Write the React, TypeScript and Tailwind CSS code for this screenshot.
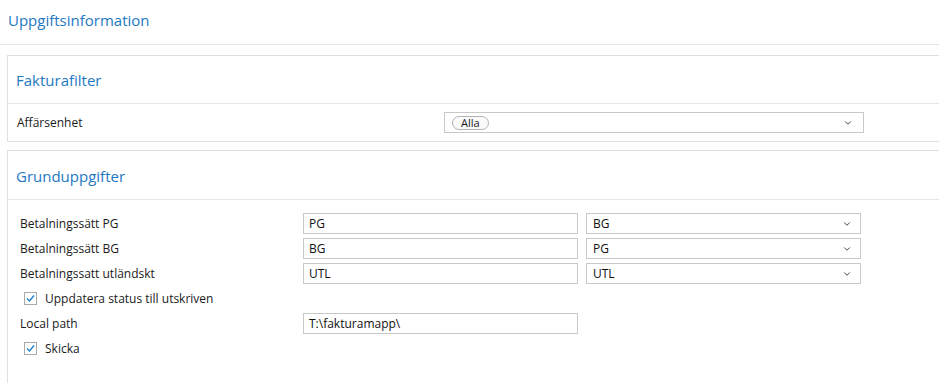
import { ChevronDown } from "lucide-react";

const font = { fontFamily: '"Segoe UI", "Open Sans", "Noto Sans", sans-serif' };

const Check = () => (
  <span className="flex h-[13px] w-[13px] items-center justify-center border border-[#a9a9a9] bg-white">
    <svg width="11" height="11" viewBox="0 0 11 11">
      <path d="M2 5.5 L4.5 8 L9 2.5" fill="none" stroke="#1f7fd0" strokeWidth="1.4" />
    </svg>
  </span>
);

const Select = ({ children, w }: { children: React.ReactNode; w: string }) => (
  <div className={`flex h-[21px] items-center justify-between border border-[#c8c8c8] bg-white pl-[6px] pr-[8px] ${w}`}>
    <span className="text-[12px] leading-none text-[#111]">{children}</span>
    <ChevronDown className="h-[10px] w-[10px] text-[#333]" strokeWidth={2.2} />
  </div>
);

const Input = ({ value }: { value: string }) => (
  <div className="flex h-[21px] w-[275px] items-center border border-[#c8c8c8] bg-white px-[5px] text-[12px] text-[#111]">
    {value}
  </div>
);

const rows = [
  { label: "Betalningssätt PG", value: "PG", sel: "BG" },
  { label: "Betalningssätt BG", value: "BG", sel: "PG" },
  { label: "Betalningssatt utländskt", value: "UTL", sel: "UTL" },
];

export default function App() {
  return (
    <div className="h-[383px] w-[939px] overflow-hidden bg-white text-[#1a1a1a]" style={font}>
      <div className="h-[45px] border-b border-[#e4e6e8] pl-[8px] pt-[9px] text-[15px] text-[#1e78c2]">
        Uppgiftsinformation
      </div>

      <div className="ml-[7px] mr-[-4px] mt-[10px] border border-[#dde1e6]">
        <div className="flex h-[48px] items-center border-b border-[#e4e7ea] pl-[8px] pt-[2px] text-[15px] text-[#1e78c2]">
          Fakturafilter
        </div>
        <div className="flex h-[37px] items-center pl-[9px] text-[12px]">
          <span className="w-[427px]">Affärsenhet</span>
          <div className="flex h-[21px] w-[420px] items-center justify-between border border-[#c8c8c8] bg-white pl-[7px] pr-[10px]">
            <span className="rounded-full border border-[#b4b4b4] bg-[#fafafa] px-[8px] text-[11px] leading-[12px]">Alla</span>
            <ChevronDown className="h-[10px] w-[10px] text-[#333]" strokeWidth={2.2} />
          </div>
        </div>
      </div>

      <div className="ml-[7px] mr-[-4px] mt-[8px] h-[300px] border border-[#dde1e6]">
        <div className="flex h-[49px] items-center border-b border-[#e4e7ea] pl-[8px] pt-[2px] text-[15px] text-[#1e78c2]">
          Grunduppgifter
        </div>
        <div className="flex flex-col gap-[4px] pl-[12px] pt-[13px] text-[12px]">
          {rows.map((r) => (
            <div key={r.label} className="flex h-[21px] items-center">
              <span className="w-[283px]">{r.label}</span>
              <Input value={r.value} />
              <div className="w-[8px]" />
              <Select w="w-[275px]">{r.sel}</Select>
            </div>
          ))}
          <div className="flex h-[21px] items-center gap-[8px] pl-[4px]">
            <Check />
            <span>Uppdatera status till utskriven</span>
          </div>
          <div className="flex h-[21px] items-center">
            <span className="w-[283px]">Local path</span>
            <Input value="T:\fakturamapp\" />
          </div>
          <div className="flex h-[21px] items-center gap-[8px] pl-[4px]">
            <Check />
            <span>Skicka</span>
          </div>
        </div>
      </div>
    </div>
  );
}
